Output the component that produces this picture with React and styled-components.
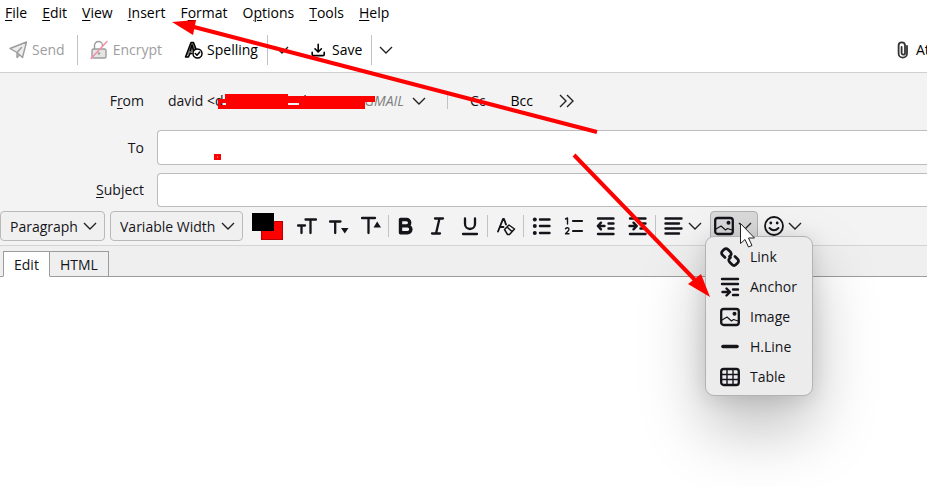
import React, { useState } from 'react'
import styled, { createGlobalStyle } from 'styled-components'

const GlobalStyle = createGlobalStyle`
  * { box-sizing: border-box; }
  body {
    margin: 0;
    background: #fff;
    overflow: hidden;
  }
  body, button, input, select, textarea {
    font-family: 'Open Sans', 'Noto Sans', sans-serif;
    font-size: 14px;
    line-height: 20px;
    color: #15141a;
  }
  svg { flex-shrink: 0; }
  u {
    text-decoration-thickness: 1px;
    text-underline-offset: 2px;
  }
`

const Window = styled.div`
  position: relative;
  display: flex;
  flex-direction: column;
  min-height: 100vh;
  overflow: hidden;
`

const PlainButton = styled.button`
  display: flex;
  align-items: center;
  flex-shrink: 0;
  padding: 0;
  border: none;
  background: none;
  white-space: nowrap;
`

const MenuBar = styled.nav`
  display: flex;
  height: 26px;
  padding-left: 5px;
  gap: 15px;
`

const MenuBarItem = styled(PlainButton)`
  color: #000;
`

const Toolbar = styled.div`
  display: flex;
  align-items: center;
  height: 47px;
  padding: 1px 0 0 9px;
  border-bottom: 1px solid #cfcfd3;
`

const ToolButton = styled(PlainButton)`
  gap: ${props => props.$gap || 4}px;
  margin-left: ${props => props.$space || 0}px;
  color: #000;
  &:disabled {
    color: #9d9d9f;
  }
`

const AttachButton = styled(PlainButton)`
  width: 30px;
  margin-left: auto;
  gap: 7px;
  color: #000;
  overflow: hidden;
`

const Divider = styled.span`
  flex-shrink: 0;
  width: 1px;
  height: ${props => props.$height || 22}px;
  margin-left: ${props => props.$before || 0}px;
  margin-right: ${props => props.$after || 0}px;
  background: #c2c2c4;
`

const Headers = styled.section`
  display: grid;
  grid-template-columns: 144px 1fr;
  grid-template-rows: 49px 35px 34px;
  gap: 8px 13px;
  align-items: center;
  padding-bottom: 4px;
  background: #f3f3f3;
`

const HeaderLabel = styled.label`
  text-align: right;
`

const HeaderInput = styled.input`
  width: 100%;
  height: 100%;
  padding: 0 10px;
  border: 1px solid #bcbcbf;
  border-right: none;
  border-radius: 4px 0 0 4px;
  background: #fff;
  outline: none;
`

const FromCell = styled.div`
  display: flex;
  align-items: center;
  padding: 6px 0 0 ${props => props.$indent || 0}px;
  justify-content: ${props => props.$end ? 'flex-end' : 'flex-start'};
`

const Identity = styled(PlainButton)`
  width: 258px;
`

const Domain = styled.span`
  margin-left: 76px;
`

const Account = styled.span`
  display: flex;
  gap: 8px;
  margin-left: auto;
  align-items: center;
  color: #808080;
  font-style: italic;
`

const FormatBar = styled.div`
  display: flex;
  align-items: center;
  height: 35px;
  padding-bottom: 4px;
  border-bottom: 1px solid #d4d4d6;
  background: #f3f3f3;
`

const SelectBox = styled.div`
  display: grid;
  flex-shrink: 0;
  align-items: center;
  width: ${props => props.$width}px;
  margin-right: ${props => props.$after}px;
  > * { grid-area: 1 / 1; }
  > svg {
    justify-self: end;
    margin-right: 8px;
    pointer-events: none;
  }
`

const Select = styled.select`
  appearance: none;
  width: 100%;
  height: 30px;
  padding: 1px 0 0 9px;
  border: 1px solid #b9b9bc;
  border-radius: 4px;
  background: #f0f0f0;
`

const Swatches = styled(PlainButton)`
  display: grid;
  width: 31px;
  height: 27px;
  margin-right: 8px;
`

const Swatch = styled.span`
  grid-area: 1 / 1;
  width: 22px;
  height: ${props => props.$back ? 19 : 18}px;
  place-self: ${props => props.$back ? 'end' : 'start'};
  border: 1px solid ${props => props.$back ? '#b80000' : '#000'};
  background: ${props => props.$back ? '#f00' : '#000'};
`

const IconButton = styled(PlainButton)`
  justify-content: center;
  width: 32px;
  height: 30px;
`

const DropButton = styled(PlainButton)`
  width: 48px;
  height: 30px;
  padding-left: 3px;
  gap: 4px;
  border: 1px solid ${props => props.$open ? '#b1b1b4' : 'transparent'};
  border-radius: 4px;
  background: ${props => props.$open ? '#d9d9da' : 'none'};
`

const DropAnchor = styled.div`
  position: relative;
  flex-shrink: 0;
  margin-left: 2px;
`

const Popup = styled.div`
  position: absolute;
  z-index: 2;
  top: 25px;
  left: -5px;
  width: 108px;
  padding: 5px 0 3px;
  border: 1px solid #b3b3b5;
  border-radius: 9px;
  background: #ececec;
  box-shadow: 0 32px 64px rgba(0, 0, 0, 0.26), 0 2px 21px rgba(0, 0, 0, 0.12);
`

const PopupItem = styled(PlainButton)`
  width: 100%;
  height: 30px;
  padding-left: 14px;
  gap: 10px;
`

const Tabs = styled.div`
  display: flex;
  align-items: flex-end;
  height: 31px;
  padding-left: 3px;
  background: #efefef;
  box-shadow: inset 0 -1px #9c9c9e;
`

const Tab = styled.button`
  height: 26px;
  padding: 1px 10px 0;
  border: 1px solid #9c9c9e;
  border-bottom-color: ${props => props.$active ? '#fff' : '#9c9c9e'};
  background: ${props => props.$active ? '#fff' : '#efefef'};
  & + & { border-left: none; }
`

const Editor = styled.textarea`
  flex: 1;
  width: 100%;
  border: none;
  outline: none;
  resize: none;
`

const Overlay = styled.svg`
  position: absolute;
  z-index: 3;
  top: 0;
  left: 0;
  pointer-events: none;
`

const Icon = ({ size = 20, w = 2.3, children }) => (
    <svg width={size} height={size} viewBox="0 0 20 20" fill="none" stroke="currentColor"
        strokeWidth={w} strokeLinecap="round" strokeLinejoin="round" aria-hidden="true">
        {children}
    </svg>
)

const Chevron = () => (
    <svg width="14" height="14" viewBox="0 0 14 14" fill="none" stroke="#222" strokeWidth="1.4" aria-hidden="true">
        <path d="M1 4l6 6 6-6" />
    </svg>
)

const solid = { fill: 'currentColor', stroke: 'none' }

const icons = {
    send: <Icon w={1.4}><path d="M1 8.500L17.500 2 13.500 17.500 8 12.500zM8 12.500l4.500-5M8 12.500V17.500l2.500-2.500" fill="#ececec" /></Icon>,
    encrypt: (
        <Icon w={1.4}>
            <rect x="2" y="9" width="14" height="9" rx="1.5" fill="#e4e4e4" />
            <path d="M4.500 8.500V5.500a4 4 0 0 1 8 0V6.500" />
            <circle cx="9" cy="13.500" r="1.2" {...solid} />
            <path d="M1 18.500L17 1.500" stroke="#f58ba5" />
        </Icon>
    ),
    spelling: (
        <Icon w={1.5}>
            <path d="M1.500 17L7 2.500h2.500L12 9M1.500 17H4.500l1.500-3.500h2M6.300 10.500L8 5l1.500 5" fill="#777" />
            <circle cx="13.500" cy="13.500" r="4.500" fill="#fff" />
            <path d="M11.300 13.500l1.700 1.700 2.800-3.200" />
        </Icon>
    ),
    save: <Icon w={2}><path d="M9 3v9M5 8.500l4 4 4-4M1.500 13v2.500q0 1.500 1.500 1.500h12q1.500 0 1.500-1.500V13" /></Icon>,
    size: <Icon><path d="M8.500 3.500h10.500M13.500 3.500V17M1 9.500h7M4.500 9.500V17" /></Icon>,
    smaller: <Icon><path d="M1 5.500h10.500M6.200 5.500V17" /><path d="M12 12h7.500l-3.700 5.500z" {...solid} /></Icon>,
    larger: <Icon><path d="M1 2h13M7.500 2v15" /><path d="M12.500 11.500H20L16.200 5.500z" {...solid} /></Icon>,
    bold: <Icon w={3.4}><path d="M4.500 3.500h6a3.200 3.200 0 0 1 0 6.400h-6M4.500 9.900h7a3.400 3.400 0 0 1 0 6.800h-7M4.500 3.500v13.200" /></Icon>,
    italic: <Icon><path d="M7 2.500h8M4 17.500h8M11.500 2.500L8 17.500" /></Icon>,
    underline: <Icon><path d="M5 2.500v5.500a5 5 0 0 0 10 0V2.500M3 18h14" /></Icon>,
    clear: (
        <Icon w={1.9}>
            <path d="M2 15.500L7 3h1L10 8.500M4 11h3.500" />
            <path d="M8.500 13.500L13 9l5.500 4-5 5.500h-2zM11 11l5 4.500" strokeWidth="1.5" />
        </Icon>
    ),
    bullets: (
        <Icon w={2.4}>
            <path d="M8 3.500h9.500M8 10h9.500M8 17h9.500" />
            <circle cx="2.8" cy="3.500" r="2" {...solid} />
            <circle cx="2.8" cy="10" r="2" {...solid} />
            <circle cx="2.8" cy="17" r="2" {...solid} />
        </Icon>
    ),
    numbers: (
        <Icon w={2.2}>
            <path d="M9 5h9M9 15h9" />
            <path d="M1.500 3L3.500 2V8M1.500 12.800q1.500-1.800 3.200-.5.800 1.500-.8 3L1.500 17.800H5" strokeWidth="1.4" />
        </Icon>
    ),
    outdent: <Icon w={2.4}><path d="M2 2.500h15.500M12.500 7.500h5M12.500 12.500h5M2 18h15.500M8.500 10H2M5 6.700L1.800 10 5 13.300" /></Icon>,
    indent: <Icon w={2.4}><path d="M2 2.500h15.500M12.500 7.500h5M12.500 12.500h5M2 18h15.500M1.500 10h7M5.500 6.700L8.800 10l-3.300 3.300" /></Icon>,
    align: <Icon w={2.4}><path d="M1.500 2.500h16M1.500 7.500h13.500M1.500 12.500h16M1.500 17.500h13.500" /></Icon>,
    image: (
        <Icon>
            <rect x="1.2" y="2" width="17.600" height="16" rx="2.5" />
            <path d="M2 13l5-3 4.500 4 2-1.500L18 14" strokeWidth="1.2" />
            <circle cx="14.500" cy="6.800" r="2" {...solid} />
        </Icon>
    ),
    smiley: (
        <Icon w={1.8}>
            <circle cx="10" cy="10" r="9" />
            <path d="M5.500 12q4.500 4.500 9 0" />
            <circle cx="6.800" cy="7" r="1.4" {...solid} />
            <circle cx="13.200" cy="7" r="1.4" {...solid} />
        </Icon>
    ),
    link: (
        <Icon w={2.7}>
            <path d="M5 10.500L2.500 8Q.5 6 2.500 4l1.500-1.500q2-2 4 0L10.500 5Q12 7 10.500 8.500L9.500 9.500" />
            <path d="M15 9.500l2.500 2.500q2 2 0 4L16 17.500q-2 2-4 0L9.500 15Q8 13 9.500 11.500L10.500 10.500" />
        </Icon>
    ),
    anchor: <Icon w={2.4}><path d="M2 2h16M2 7h16M13 12.500h5M13 18h5M2.500 15h6.500M6.500 11.500L10 15l-3.500 3.500" /></Icon>,
    line: <Icon w={3.6}><path d="M3 9.500h14" /></Icon>,
    table: (
        <Icon>
            <rect x="1.2" y="2" width="17.600" height="16" rx="2.5" />
            <path d="M7 2v16M13 2v16M1 7.500h18M1 12.500h18" strokeWidth="1.4" />
        </Icon>
    ),
}

const menus = [
    ['', 'F', 'ile'],
    ['', 'E', 'dit'],
    ['', 'V', 'iew'],
    ['', 'I', 'nsert'],
    ['F', 'o', 'rmat'],
    ['O', 'p', 'tions'],
    ['', 'T', 'ools'],
    ['', 'H', 'elp'],
]

const formatGroups = [
    ['size', 'smaller', 'larger'],
    ['bold', 'italic', 'underline'],
    ['clear'],
    ['bullets', 'numbers', 'outdent', 'indent'],
]

const insertItems = [
    ['link', 'Link'],
    ['anchor', 'Anchor'],
    ['image', 'Image'],
    ['line', 'H.Line'],
    ['table', 'Table'],
]

const App = () => {
    const [insertOpen, setInsertOpen] = useState(true)
    const [tab, setTab] = useState('Edit')

    return (
        <Window>
            <GlobalStyle />
            <MenuBar>
                {menus.map(([before, key, after]) => (
                    <MenuBarItem key={before + key + after}>
                        <span>{before}<u>{key}</u>{after}</span>
                    </MenuBarItem>
                ))}
            </MenuBar>

            <Toolbar>
                <ToolButton disabled $gap={3}>{icons.send}Send</ToolButton>
                <Divider $height={30} $before={12} $after={12} />
                <ToolButton disabled $gap={3}>{icons.encrypt}Encrypt</ToolButton>
                <ToolButton $space={22} $gap={3}>{icons.spelling}Spelling</ToolButton>
                <Divider $height={30} $before={9} $after={7} />
                <ToolButton aria-label="Spelling options"><Chevron /></ToolButton>
                <ToolButton $space={22} $gap={5}>
                    {React.cloneElement(icons.save, { size: 16 })}Save
                </ToolButton>
                <Divider $height={30} $before={9} $after={7} />
                <ToolButton aria-label="Save options"><Chevron /></ToolButton>
                <AttachButton>
                    <svg width="12" height="18" viewBox="0 0 12 18" fill="none" stroke="#333" strokeWidth="1.8" strokeLinecap="round" aria-hidden="true">
                        <path d="M10 5V12.500a4.200 4.200 0 0 1-8.400 0V4.500a3.200 3.200 0 0 1 6.400 0V12a1.700 1.700 0 0 1-3.400 0V6" />
                    </svg>
                    Attach
                </AttachButton>
            </Toolbar>

            <Headers>
                <FromCell $end><span>F<u>r</u>om</span></FromCell>
                <FromCell $indent={11}>
                    <Identity aria-haspopup="listbox">
                        <span>david &lt;d</span>
                        <Domain>il</Domain>
                        <Account>GMAIL<Chevron /></Account>
                    </Identity>
                    <Divider $height={17} $before={21} $after={22} />
                    <PlainButton>Cc</PlainButton>
                    <ToolButton $space={25}>Bcc</ToolButton>
                    <ToolButton $space={26} aria-label="More address fields">
                        <svg width="15" height="14" viewBox="0 0 15 14" fill="none" stroke="#222" strokeWidth="1.4" aria-hidden="true">
                            <path d="M1 1l6 6-6 6M8 1l6 6-6 6" />
                        </svg>
                    </ToolButton>
                </FromCell>
                <HeaderLabel htmlFor="to">To</HeaderLabel>
                <HeaderInput id="to" />
                <HeaderLabel htmlFor="subject"><u>S</u>ubject</HeaderLabel>
                <HeaderInput id="subject" />
            </Headers>

            <FormatBar>
                <SelectBox $width={105} $after={5}>
                    <Select aria-label="Paragraph format"><option>Paragraph</option></Select>
                    <Chevron />
                </SelectBox>
                <SelectBox $width={133} $after={9}>
                    <Select aria-label="Font"><option>Variable Width</option></Select>
                    <Chevron />
                </SelectBox>
                <Swatches aria-label="Text and background color">
                    <Swatch $back />
                    <Swatch />
                </Swatches>
                {formatGroups.map(group => (
                    <React.Fragment key={group[0]}>
                        {group.map(name => (
                            <IconButton key={name} aria-label={name}>{icons[name]}</IconButton>
                        ))}
                        <Divider $before={1} $after={group[0] === 'size' ? 1 : 2} />
                    </React.Fragment>
                ))}
                <DropAnchor>
                    <DropButton aria-label="Align">{icons.align}<Chevron /></DropButton>
                </DropAnchor>
                <DropAnchor>
                    <DropButton
                        $open={insertOpen}
                        aria-label="Insert"
                        aria-expanded={insertOpen}
                        onClick={() => setInsertOpen(!insertOpen)}
                    >
                        {icons.image}<Chevron />
                    </DropButton>
                    {insertOpen ? (
                        <Popup role="menu">
                            {insertItems.map(([icon, label]) => (
                                <PopupItem key={label} role="menuitem">{icons[icon]}{label}</PopupItem>
                            ))}
                        </Popup>
                    ) : null}
                </DropAnchor>
                <DropAnchor>
                    <DropButton aria-label="Smiley">{icons.smiley}<Chevron /></DropButton>
                </DropAnchor>
            </FormatBar>

            <Tabs role="tablist">
                {['Edit', 'HTML'].map(name => (
                    <Tab key={name} role="tab" $active={tab === name} aria-selected={tab === name} onClick={() => setTab(name)}>
                        {name}
                    </Tab>
                ))}
            </Tabs>
            <Editor aria-label="Message body" />

            {/* red markup and the mouse pointer */}
            <Overlay width="927" height="487" viewBox="0 0 927 487" aria-hidden="true">
                <g fill="#f00">
                    <path fillRule="evenodd" d="M225 94h63v2h87v6h-10v7H218V99h7zM221 103v2h5v-2zM288 103v2h11v-2z" />
                    <path d="M214 154h7v6h-7z" />
                    <path d="M172 22L196 20 193 35z" />
                    <path d="M710 297L701 274 688 284z" />
                </g>
                <path d="M217 156h1v2h-1z" fill="#f66" />
                <path d="M194 27L597 132M574 155L696 281" stroke="#f00" strokeWidth="4" />
                <path d="M740.500 223.500v20l4.500-4 3.500 7.500 3.500-1.500-3.500-7.500h6z" fill="#fff" stroke="#222" />
            </Overlay>
        </Window>
    )
}

export default App
